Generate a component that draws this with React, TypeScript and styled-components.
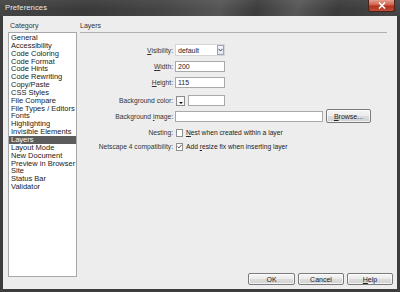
import React from 'react';
import styled, { createGlobalStyle } from 'styled-components';

const Global = createGlobalStyle`
  html, body { margin: 0; padding: 0; background: #3a3a3a; }
  body { width: 400px; height: 292px; overflow: hidden; font-family: "Liberation Sans", Arial, sans-serif; }
  * { box-sizing: border-box; }
`;

const Window = styled.div`
  width: 400px;
  height: 292px;
  display: flex;
  flex-direction: column;
  background: #3d3d3d;
`;

const TitleBar = styled.div`
  height: 16px;
  flex: none;
  display: flex;
  align-items: flex-start;
  justify-content: space-between;
  padding: 0 5px 0 5px;
  background:
    linear-gradient(180deg, rgba(255,255,255,0.06) 0%, rgba(255,255,255,0) 60%),
    linear-gradient(105deg, #444 0%, #3a3a3a 22%, #444 40%, #555 55%, #3c3c3c 64%, #585858 74%, #3b3b3b 84%, #454545 100%);
`;

const Title = styled.span`
  color: #eeeeee;
  font-size: 7.6px;
  line-height: 16px;
  letter-spacing: 0.1px;
`;

const CloseButton = styled.div`
  width: 27px;
  height: 12px;
  border: 1px solid #4a2018;
  border-top: none;
  border-radius: 0 0 3px 3px;
  background: linear-gradient(180deg, #e4a090 0%, #d0604a 45%, #b0301c 55%, #c05038 100%);
  display: flex;
  align-items: center;
  justify-content: center;
`;

const Body = styled.div`
  flex: 1;
  margin: 0 3px 3px 3px;
  background: #ededed;
  display: flex;
  gap: 3px;
  padding: 5px 4px 4px 5px;
`;

const Sidebar = styled.div`
  width: 69px;
  flex: none;
  display: flex;
  flex-direction: column;
  padding-bottom: 8px;
`;

const Caption = styled.div`
  font-size: 7px;
  line-height: 9px;
  height: 9px;
  color: #333;
  padding-left: 2px;
  margin-bottom: 2px;
`;

const List = styled.div`
  flex: 1;
  background: #ffffff;
  border: 1px solid #a8a8a8;
  padding-top: 1px;
`;

const Item = styled.div<{ $selected?: boolean }>`
  height: 7.85px;
  line-height: 7.85px;
  font-size: 7.5px;
  padding-left: 2px;
  white-space: nowrap;
  color: ${p => (p.$selected ? '#f4f4f4' : '#222')};
  background: ${p => (p.$selected ? '#5c5c5c' : 'transparent')};
`;

const Main = styled.div`
  flex: 1;
  display: flex;
  flex-direction: column;
`;

const Heading = styled.div`
  font-size: 7px;
  line-height: 9px;
  height: 9px;
  color: #333;
  margin-bottom: 2px;
`;

const Divider = styled.div`
  border-top: 1px solid #b0b0b0;
  margin-right: 6px;
`;

const Row = styled.div<{ $mt: number; $h: number }>`
  display: grid;
  grid-template-columns: 93px 1fr;
  column-gap: 2px;
  align-items: center;
  margin-top: ${p => p.$mt}px;
  height: ${p => p.$h}px;
`;

const Label = styled.div`
  font-size: 6.7px;
  color: #333;
  text-align: right;
  white-space: nowrap;
`;

const Controls = styled.div`
  display: flex;
  align-items: center;
  gap: 3px;
`;

const Key = styled.span`
  text-decoration: underline;
  text-underline-offset: 1px;
`;

const Select = styled.div`
  width: 50px;
  height: 12px;
  background: #fff;
  border: 1px solid #d6d6d6;
  display: flex;
  align-items: center;
  justify-content: space-between;
  font-size: 7px;
  color: #222;
  padding-left: 2px;
`;

const SelectArrow = styled.div`
  width: 7px;
  height: 10px;
  border: 1px solid #9aa6b8;
  background: linear-gradient(#f6f8fb, #dfe5ee);
  display: flex;
  align-items: center;
  justify-content: center;
`;

const Input = styled.div<{ $w: number }>`
  width: ${p => p.$w}px;
  height: 11px;
  background: #fff;
  border: 1px solid #a9a9a9;
  font-size: 7px;
  line-height: 9px;
  color: #222;
  padding-left: 2px;
`;

const Swatch = styled.div`
  position: relative;
  width: 9px;
  height: 10px;
  margin-left: 1px;
  background: #f8f8f8;
  border: 1px solid #8c8c8c;
`;

const SwatchMark = styled.div`
  position: absolute;
  right: 1px;
  bottom: 1px;
  width: 0;
  height: 0;
  border-left: 2px solid transparent;
  border-right: 2px solid transparent;
  border-top: 2px solid #111;
`;

const Button = styled.div<{ $w: number; $h: number }>`
  width: ${p => p.$w}px;
  height: ${p => p.$h}px;
  border: 1px solid #7a7a7a;
  border-radius: 2px;
  background: linear-gradient(180deg, #f6f6f6 0%, #ebebeb 48%, #dcdcdc 52%, #d2d2d2 100%);
  box-shadow: inset 0 0 0 1px rgba(255,255,255,0.7);
  font-size: 7px;
  color: #222;
  display: flex;
  align-items: center;
  justify-content: center;
`;

const Check = styled.div`
  width: 7px;
  height: 8px;
  margin-left: 1px;
  background: #fff;
  border: 1px solid #8e8f8f;
  display: flex;
  align-items: center;
  justify-content: center;
`;

const CheckText = styled.span`
  font-size: 6.7px;
  color: #222;
  white-space: nowrap;
`;

const Footer = styled.div`
  margin-top: auto;
  display: flex;
  justify-content: flex-end;
  gap: 3px;
`;

const categories = [
  'General', 'Accessibility', 'Code Coloring', 'Code Format', 'Code Hints',
  'Code Rewriting', 'Copy/Paste', 'CSS Styles', 'File Compare', 'File Types / Editors',
  'Fonts', 'Highlighting', 'Invisible Elements', 'Layers', 'Layout Mode',
  'New Document', 'Preview in Browser', 'Site', 'Status Bar', 'Validator',
];

export default function App() {
  return (
    <>
      <Global />
      <Window>
        <TitleBar>
          <Title>Preferences</Title>
          <CloseButton>
            <svg width="8" height="7" viewBox="0 0 8 7">
              <path d="M1 0.5 L7 6.5 M7 0.5 L1 6.5" stroke="#fff" strokeWidth="1.6" />
            </svg>
          </CloseButton>
        </TitleBar>
        <Body>
          <Sidebar>
            <Caption>Category</Caption>
            <List>
              {categories.map(c => (
                <Item key={c} $selected={c === 'Layers'}>{c}</Item>
              ))}
            </List>
          </Sidebar>
          <Main>
            <Heading>Layers</Heading>
            <Divider />
            <Row $mt={11} $h={12}>
              <Label><Key>V</Key>isibility:</Label>
              <Controls>
                <Select>
                  default
                  <SelectArrow>
                    <svg width="5" height="4" viewBox="0 0 5 4">
                      <path d="M0.5 0.8 L2.5 3 L4.5 0.8" stroke="#334466" strokeWidth="1" fill="none" />
                    </svg>
                  </SelectArrow>
                </Select>
              </Controls>
            </Row>
            <Row $mt={5} $h={11}>
              <Label><Key>W</Key>idth:</Label>
              <Controls><Input $w={50}>200</Input></Controls>
            </Row>
            <Row $mt={5} $h={11}>
              <Label><Key>H</Key>eight:</Label>
              <Controls><Input $w={50}>115</Input></Controls>
            </Row>
            <Row $mt={7} $h={11}>
              <Label>Background color:</Label>
              <Controls>
                <Swatch><SwatchMark /></Swatch>
                <Input $w={37} />
              </Controls>
            </Row>
            <Row $mt={3} $h={14}>
              <Label>Background <Key>i</Key>mage:</Label>
              <Controls>
                <Input $w={148} />
                <Button $w={45} $h={14}><span><Key>B</Key>rowse...</span></Button>
              </Controls>
            </Row>
            <Row $mt={5} $h={9}>
              <Label>Nesting:</Label>
              <Controls>
                <Check />
                <CheckText><Key>N</Key>est when created within a layer</CheckText>
              </Controls>
            </Row>
            <Row $mt={5} $h={9}>
              <Label>Netscape 4 compatibility:</Label>
              <Controls>
                <Check>
                  <svg width="5" height="5" viewBox="0 0 5 5">
                    <path d="M0.5 2.5 L2 4 L4.6 0.8" stroke="#4a4a4a" strokeWidth="0.9" fill="none" />
                  </svg>
                </Check>
                <CheckText>Add <Key>r</Key>esize fix when inserting layer</CheckText>
              </Controls>
            </Row>
            <Footer>
              <Button $w={47} $h={12}>OK</Button>
              <Button $w={46} $h={12}>Cancel</Button>
              <Button $w={46} $h={12}><span><Key>H</Key>elp</span></Button>
            </Footer>
          </Main>
        </Body>
      </Window>
    </>
  );
}
